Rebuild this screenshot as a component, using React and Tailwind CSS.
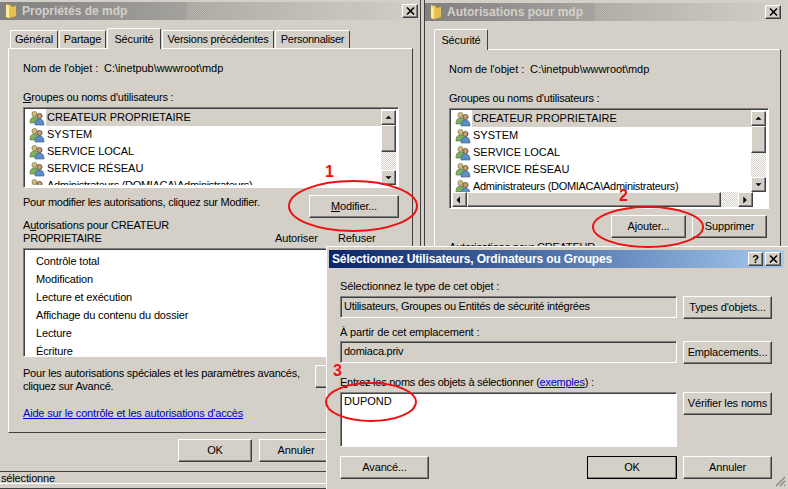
import React from 'react';

const FONT = "font-['Liberation_Sans',Arial,sans-serif]";
const RAISED = 'border border-t-white border-l-white border-r-[#404040] border-b-[#404040] shadow-[inset_-1px_-1px_0_#808080]';
const SUNKEN = 'border border-t-[#808080] border-l-[#808080] border-r-white border-b-white shadow-[inset_1px_1px_0_#404040]';
const DITHER = 'bg-[repeating-conic-gradient(#ffffff_0_25%,#d4d0c8_0_50%)] bg-[length:2px_2px]';
const TITLE_DITHER = 'bg-[repeating-conic-gradient(#d4d0c866_0_25%,transparent_0_50%)] bg-[length:2px_2px]';

const USERS = ['CREATEUR PROPRIETAIRE', 'SYSTEM', 'SERVICE LOCAL', 'SERVICE RÉSEAU', 'Administrateurs (DOMIACA\\Administrateurs)'];
const PERMS = ['Contrôle total', 'Modification', 'Lecture et exécution', 'Affichage du contenu du dossier', 'Lecture', 'Écriture'];

const Folder = () => (
    <svg width="16" height="16" viewBox="0 0 16 16" className="shrink-0">
        <path d="M3 1 L8 2 L8 4 L13 3 L13 13 L6 15 L3 14 Z" fill="#f3d46e" stroke="#b08d2e" strokeWidth="0.7" />
        <path d="M6 5 L13 3 L13 13 L6 15 Z" fill="#e8c050" />
        <path d="M3 1 L6 5 L6 15 L3 14 Z" fill="#fbeaa6" />
    </svg>
);

const UsersIcon = () => (
    <svg width="16" height="16" viewBox="0 0 16 16" className="shrink-0">
        <circle cx="5.5" cy="4" r="2.6" fill="#d8b878" stroke="#6b6b3a" strokeWidth="0.6" />
        <path d="M1 13 C1 8 3 7 5.5 7 C8 7 9 8 9 13 Z" fill="#7fae5c" stroke="#4d7038" strokeWidth="0.6" />
        <circle cx="10.5" cy="6" r="2.6" fill="#c89a68" stroke="#3a3a3a" strokeWidth="0.7" />
        <path d="M6 15 C6 10.5 8 9 10.5 9 C13 9 15 10.5 15 15 Z" fill="#5b8fc4" stroke="#2f5a8a" strokeWidth="0.6" />
    </svg>
);

const Arrow = ({ dir }) => {
    const points = { up: '4,7 7.5,3.5 11,7', down: '4,4 7.5,7.5 11,4', left: '8,2 4,6 8,10', right: '5,2 9,6 5,10' };
    return (
        <svg width="15" height="12" viewBox="0 0 15 12">
            <polygon points={points[dir]} fill="#000" />
        </svg>
    );
};

const ScrollBtn = ({ dir }) => (
    <div className={`${RAISED} bg-[#d4d0c8] w-[15px] h-[15px] flex items-center justify-center shrink-0`}>
        <Arrow dir={dir} />
    </div>
);

const Button = ({ className = '', children }) => (
    <div className={`${RAISED} bg-[#d4d0c8] h-[23px] flex items-center justify-center shrink-0 whitespace-nowrap ${className}`}>
        {children}
    </div>
);

const CloseBtn = () => (
    <div className={`${RAISED} bg-[#d4d0c8] w-[16px] h-[14px] flex items-center justify-center shrink-0`}>
        <svg width="9" height="8" viewBox="0 0 9 8">
            <path d="M1 0.5 L8 7.5 M8 0.5 L1 7.5" stroke="#000" strokeWidth="1.5" />
        </svg>
    </div>
);

const TitleBar = ({ title, ditherClass }) => (
    <div className="h-[18px] flex items-center pl-[3px] pr-[2px] bg-gradient-to-r from-[#808080] via-[#a8a6a0] to-[#d4d0c8]">
        <Folder />
        <span className="ml-[3px] text-[12px] tracking-normal font-bold text-[#d4d0c8] whitespace-nowrap">{title}</span>
        <div className={`h-full ${ditherClass} ${TITLE_DITHER}`} />
        <div className="grow" />
        <CloseBtn />
    </div>
);

const Tab = ({ active, className = '', children }) => (
    <div className={`border-t border-l border-r border-t-white border-l-white border-r-[#404040] rounded-t-[2px] bg-[#d4d0c8] flex items-center justify-center whitespace-nowrap ${active ? 'h-[21px] relative z-10 -mb-px' : 'h-[18px]'} ${className}`}>
        {children}
    </div>
);

const UserRows = () => USERS.map((name, i) => (
    <div key={name} className="h-[17px] flex items-center pl-[3px] shrink-0">
        <UsersIcon />
        <span className={`ml-px pl-px whitespace-nowrap grow ${i === 0 ? 'bg-[#d4d0c8]' : ''} ${i === 4 ? 'tracking-[-0.3px]' : 'tracking-normal'}`}>{name}</span>
    </div>
));

const VScroll = ({ className = '' }) => (
    <div className={`w-[15px] flex flex-col shrink-0 ${className}`}>
        <ScrollBtn dir="up" />
        <div className={`${RAISED} bg-[#d4d0c8] h-[27px] shrink-0`} />
        <div className={`grow ${DITHER}`} />
        <ScrollBtn dir="down" />
    </div>
);

const LeftWindow = () => (
    <div className="absolute left-0 top-0 w-[421px] h-[489px] bg-[#d4d0c8] pt-[2px] border-r border-b border-r-[#404040] border-b-[#404040]">
        <TitleBar title="Propriétés de mdp" ditherClass="ml-[60px] w-[165px]" />
        <div className="flex items-end h-[28px] pl-[10px] gap-px">
            <Tab className="w-[48px]">Général</Tab>
            <Tab className="w-[47px]">Partage</Tab>
            <Tab active className="w-[54px]">Sécurité</Tab>
            <Tab className="w-[112px] tracking-[-0.25px]">Versions précédentes</Tab>
            <Tab className="w-[75px] tracking-[-0.3px]">Personnaliser</Tab>
        </div>
        <div className="ml-[8px] w-[405px] h-[385px] border border-t-white border-l-white border-r-[#404040] border-b-[#404040] px-[14px] pt-[12px]">
            <div className="h-[14px] leading-[14px] tracking-[-0.06px]">Nom de l'objet :&nbsp; C:\inetpub\wwwroot\mdp</div>
            <div className="mt-[15px] h-[14px] leading-[14px] tracking-[-0.22px]"><u>G</u>roupes ou noms d'utilisateurs :</div>
            <div className={`${SUNKEN} mt-[3px] h-[81px] w-[376px] bg-white flex p-[2px] overflow-hidden`}>
                <div className="grow flex flex-col overflow-hidden mt-[-1px]"><UserRows /></div>
                <VScroll />
            </div>
            <div className="flex justify-between mt-[7px] items-start">
                <div className="mt-[-1px] tracking-[-0.27px]">Pour modifier les autorisations, cliquez sur Modifier.</div>
                <Button className="w-[90px] mr-[-1px]"><span><u>M</u>odifier...</span></Button>
            </div>
            <div className="flex items-end mt-[1px] leading-[13px]">
                <div className="w-[252px] tracking-[-0.2px]">A<u>u</u>torisations pour CREATEUR<br />PROPRIETAIRE</div>
                <div className="w-[63px]">Autoriser</div>
                <div>Refuser</div>
            </div>
            <div className={`${SUNKEN} mt-[3px] h-[109px] w-[376px] bg-white pl-[12px] pt-[3px] overflow-hidden`}>
                {PERMS.map((perm) => (
                    <div key={perm} className="h-[18px] leading-[18px]">{perm}</div>
                ))}
            </div>
            <div className="flex mt-[8px] items-start">
                <div className="mt-[2px] w-[292px] leading-[13px] whitespace-nowrap tracking-[-0.22px]">Pour les autorisations spéciales et les paramètres avancés,<br />cliquez sur Avancé.</div>
                <Button className="w-[60px]" />
            </div>
            <div className="mt-[12px] text-[#0000cc] underline tracking-[-0.18px]">Aide sur le contrôle et les autorisations d'accès</div>
        </div>
        <div className="flex gap-[7px] pl-[178px] mt-[6px]">
            <Button className="w-[74px]">OK</Button>
            <Button className="w-[74px]">Annuler</Button>
        </div>
        <div className="mt-[9px] h-[13px] border-t border-b border-t-[#404040] border-b-white leading-[12px] pl-px">sélectionne</div>
    </div>
);

const RightWindow = () => (
    <div className="absolute left-[424px] top-0 w-[364px] h-[489px] bg-[#d4d0c8] pt-[3px] pr-[5px] border-l border-l-[#404040]">
        <TitleBar title="Autorisations pour mdp" ditherClass="ml-[12px] w-[150px]" />
        <div className="flex items-end h-[28px] pl-[9px]">
            <Tab active className="w-[54px]">Sécurité</Tab>
        </div>
        <div className="ml-[9px] w-[347px] h-[300px] border border-t-white border-l-white border-r-[#404040] px-[14px] pt-[12px]">
            <div className="h-[14px] leading-[14px] tracking-[-0.06px]">Nom de l'objet :&nbsp; C:\inetpub\wwwroot\mdp</div>
            <div className="mt-[15px] h-[14px] leading-[14px] tracking-[-0.22px]">Groupes ou noms d'utilisateurs :</div>
            <div className={`${SUNKEN} mt-[3px] h-[101px] w-[320px] bg-white p-[2px] flex flex-col overflow-hidden`}>
                <div className="flex h-[81px] shrink-0">
                    <div className="grow flex flex-col overflow-hidden mt-[-1px]"><UserRows /></div>
                    <VScroll />
                </div>
                <div className="flex h-[15px] shrink-0 w-[301px]">
                    <ScrollBtn dir="left" />
                    <div className={`${RAISED} bg-[#d4d0c8] w-[254px]`} />
                    <div className={`grow ${DITHER}`} />
                    <ScrollBtn dir="right" />
                </div>
            </div>
            <div className="flex justify-end gap-[6px] mt-[6px] mr-[-1px]">
                <Button className="w-[75px]">Ajouter...</Button>
                <Button className="w-[75px]">Supprimer</Button>
            </div>
            <div className="mt-[1px] tracking-[-0.2px]">Autorisations pour CREATEUR</div>
        </div>
    </div>
);

const ReadOnlyField = ({ children }) => (
    <div className={`${SUNKEN} w-[337px] h-[22px] pl-[3px] pt-[2px] leading-[14px] whitespace-nowrap shrink-0 tracking-[-0.26px]`}>{children}</div>
);

const SelectDialog = () => (
    <div className="absolute left-[326px] top-[246px] w-[462px] h-[243px] bg-[#d4d0c8] border-t border-l border-t-white border-l-white pt-[3px] pl-[2px]">
        <div className="h-[18px] w-[455px] flex items-center pl-[3px] pr-[3px] gap-[2px] bg-gradient-to-r from-[#0a246a] to-[#a6caf0]">
            <span className="text-[12px] tracking-[-0.15px] font-bold text-white grow whitespace-nowrap">Sélectionnez Utilisateurs, Ordinateurs ou Groupes</span>
            <div className={`${RAISED} bg-[#d4d0c8] w-[15px] h-[14px] flex items-center justify-center text-[11px] font-bold leading-none`}>?</div>
            <CloseBtn />
        </div>
        <div className="pl-[11px] pt-[11px]">
            <div className="h-[14px] leading-[14px]">Sélectionnez le type de cet objet :</div>
            <div className="flex gap-[6px] mt-[3px]">
                <ReadOnlyField>Utilisateurs, Groupes ou Entités de sécurité intégrées</ReadOnlyField>
                <Button className="w-[89px]">Types d'objets...</Button>
            </div>
            <div className="h-[14px] leading-[14px] mt-[6px]">À partir de cet emplacement :</div>
            <div className="flex gap-[6px] mt-[2px]">
                <ReadOnlyField>domiaca.priv</ReadOnlyField>
                <Button className="w-[89px]">Emplacements...</Button>
            </div>
            <div className="h-[14px] leading-[14px] mt-[11px] tracking-[-0.25px]"><u>E</u>ntrez les noms des objets à sélectionner (<span className="text-[#0000cc] underline">exemples</span>) :</div>
            <div className="flex gap-[6px] mt-[3px] items-start">
                <div className={`${SUNKEN} w-[337px] h-[55px] bg-white pl-[3px] pt-px leading-[14px] shrink-0 tracking-normal`}>DUPOND</div>
                <Button className="w-[89px]">Vérifier les noms</Button>
            </div>
            <div className="flex mt-[9px]">
                <Button className="w-[89px]">Avancé...</Button>
                <Button className="w-[90px] ml-[158px] !border-black">OK</Button>
                <Button className="w-[89px] ml-[6px]">Annuler</Button>
            </div>
        </div>
        <svg width="12" height="12" viewBox="0 0 12 12" className="absolute right-[2px] bottom-[2px]">
            <path d="M11 2 L2 11 M11 6 L6 11 M11 10 L10 11" stroke="#808080" strokeWidth="1.2" />
        </svg>
    </div>
);

// Red annotations drawn over the windows
const Annotations = () => (
    <>
        <svg width="788" height="489" viewBox="0 0 788 489" fill="none" className="absolute inset-0 pointer-events-none">
            <ellipse cx="353" cy="206" rx="64" ry="25" stroke="#ee1111" strokeWidth="2" />
            <ellipse cx="648" cy="227" rx="55" ry="20" stroke="#ee1111" strokeWidth="2" />
            <ellipse cx="371" cy="402" rx="45" ry="19" stroke="#ee1111" strokeWidth="2" />
        </svg>
        <span className="absolute left-[325px] top-[160px] text-[16px] font-bold text-[#ee1111]">1</span>
        <span className="absolute left-[619px] top-[184px] text-[16px] font-bold text-[#ee1111]">2</span>
        <span className="absolute left-[333px] top-[359px] text-[16px] font-bold text-[#ee1111]">3</span>
    </>
);

export default function App() {
    return (
        <div className={`relative w-[788px] h-[489px] overflow-hidden bg-[#d4d0c8] text-[11px] tracking-[-0.15px] text-black ${FONT}`}>
            <LeftWindow />
            <RightWindow />
            <SelectDialog />
            <Annotations />
        </div>
    );
}
